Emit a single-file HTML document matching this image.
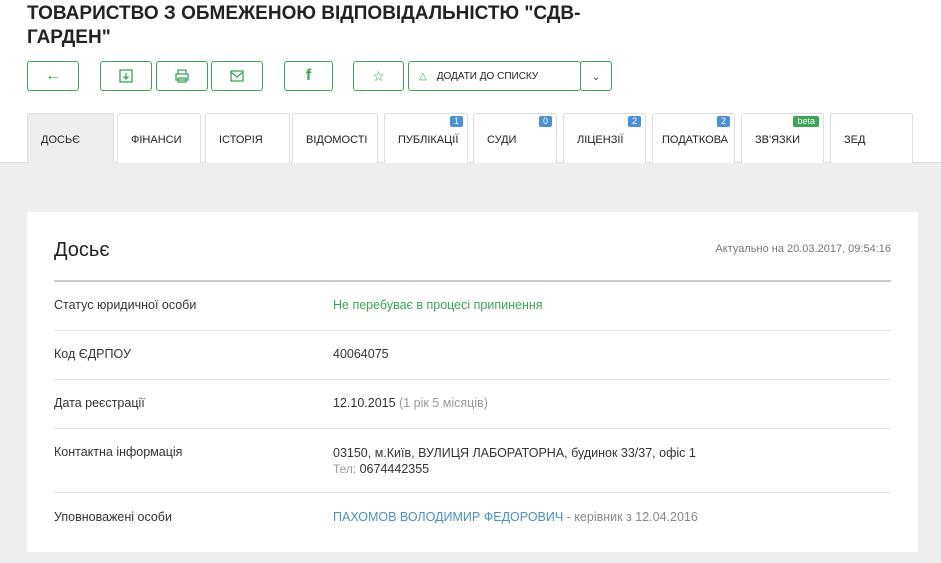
<!DOCTYPE html><html><head><meta charset="utf-8"><style>
body{margin:0;width:941px;height:540px;overflow:hidden;background:#fff;font-family:"Liberation Sans",sans-serif;position:relative}
.a{position:absolute}
h1{position:absolute;left:27px;top:2px;margin:0;font-size:19px;line-height:24px;font-weight:bold;color:#222;width:560px}
.b{position:absolute;top:61px;border:1px solid #3aa655;border-radius:3px;box-sizing:border-box;height:30px;display:flex;align-items:center;justify-content:center;color:#3aa655}
.t{position:absolute;top:113px;height:50px;border:1px solid #ddd;border-bottom:none;border-radius:3px 3px 0 0;box-sizing:border-box;font-size:11px;color:#222;padding:20px 0 0 13px;background:#fff}
.bd{position:absolute;top:2px;right:4px;background:#4a90d9;color:#fff;font-size:9px;padding:0 4px;border-radius:2px;line-height:11px}
.gray{position:absolute;left:0;top:162px;width:941px;height:400px;background:#eeeeee;border-top:1px solid #ddd}
.card{position:absolute;left:27px;top:212px;width:891px;height:340px;background:#fff}
.row{position:absolute;left:27px;width:837px;border-top:1px solid #e3e3e3;font-size:12.5px;color:#333}
.row span{position:absolute;left:279px}
</style></head><body>
<h1>ТОВАРИСТВО З ОБМЕЖЕНОЮ ВІДПОВІДАЛЬНІСТЮ "СДВ-ГАРДЕН"</h1>
<div class="b" style="left:27px;width:52px">&#8592;</div>
<div class="b" style="left:100px;width:52px"><svg width="14" height="14"><rect x="1" y="1" width="12" height="12" fill="none" stroke="#3aa655" stroke-width="1.3"/><path d="M7 4v6M4.5 7.5L7 10l2.5-2.5" fill="none" stroke="#3aa655" stroke-width="1.3"/></svg></div>
<div class="b" style="left:156px;width:52px"><svg width="14" height="14"><path d="M3 5V1h8v4M1 5h12v6H1zM3 9h8v4H3z" fill="#fff" stroke="#3aa655" stroke-width="1.3"/></svg></div>
<div class="b" style="left:211px;width:52px"><svg width="14" height="12"><rect x="1" y="1" width="12" height="10" fill="none" stroke="#3aa655" stroke-width="1.3"/><path d="M1 2l6 5 6-5" fill="none" stroke="#3aa655" stroke-width="1.3"/></svg></div>
<div class="b" style="left:284px;width:49px;font-weight:bold;font-size:16px">f</div>
<div class="b" style="left:353px;width:51px;font-size:14px">☆</div>
<div class="b" style="left:408px;width:173px;justify-content:flex-start;padding-left:10px;font-size:10px;color:#222"><span style="color:#3aa655;margin-right:10px">△</span>ДОДАТИ ДО СПИСКУ</div>
<div class="b" style="left:580px;width:32px;color:#444;font-size:11px">&#8964;</div>
<div class="gray"></div>
<div class="t" style="left:27px;width:87px;background:#eee">ДОСЬЄ</div>
<div class="t" style="left:117px;width:84px">ФІНАНСИ</div>
<div class="t" style="left:205px;width:85px">ІСТОРІЯ</div>
<div class="t" style="left:292px;width:86px">ВІДОМОСТІ</div>
<div class="t" style="left:384px;width:84px">ПУБЛІКАЦІЇ<span class="bd">1</span></div>
<div class="t" style="left:473px;width:84px">СУДИ<span class="bd">0</span></div>
<div class="t" style="left:563px;width:83px">ЛІЦЕНЗІЇ<span class="bd">2</span></div>
<div class="t" style="left:652px;width:83px;padding-left:9px">ПОДАТКОВА<span class="bd">2</span></div>
<div class="t" style="left:741px;width:83px">ЗВ'ЯЗКИ<span class="bd" style="background:#3aa655">beta</span></div>
<div class="t" style="left:830px;width:83px">ЗЕД</div>
<div class="card">
<div class="a" style="left:27px;top:27px;font-size:20px;color:#222">Досьє</div>
<div class="a" style="right:27px;top:31px;font-size:11px;color:#777">Актуально на 20.03.2017, 09:54:16</div>
<div class="row" style="top:68px;border-top:2px solid #ccc;height:49px"><div class="a" style="top:16px">Статус юридичної особи</div><span style="top:16px;color:#3aa655">Не перебуває в процесі припинення</span></div>
<div class="row" style="top:118px;height:49px"><div class="a" style="top:16px">Код ЄДРПОУ</div><span style="top:16px">40064075</span></div>
<div class="row" style="top:167px;height:49px"><div class="a" style="top:16px">Дата реєстрації</div><span style="top:16px">12.10.2015 <b style="font-weight:normal;color:#999">(1 рік 5 місяців)</b></span></div>
<div class="row" style="top:216px;height:64px"><div class="a" style="top:16px">Контактна інформація</div><span style="top:16px;line-height:16px">03150, м.Київ, ВУЛИЦЯ ЛАБОРАТОРНА, будинок 33/37, офіс 1<br><b style="font-weight:normal;color:#999;font-size:12px">Тел: </b>0674442355</span></div>
<div class="row" style="top:280px;height:60px"><div class="a" style="top:17px">Уповноважені особи</div><span style="top:17px;color:#4a8fcf">ПАХОМОВ ВОЛОДИМИР ФЕДОРОВИЧ <b style="font-weight:normal;color:#888">- керівник з 12.04.2016</b></span></div>
</div>
</body></html>
